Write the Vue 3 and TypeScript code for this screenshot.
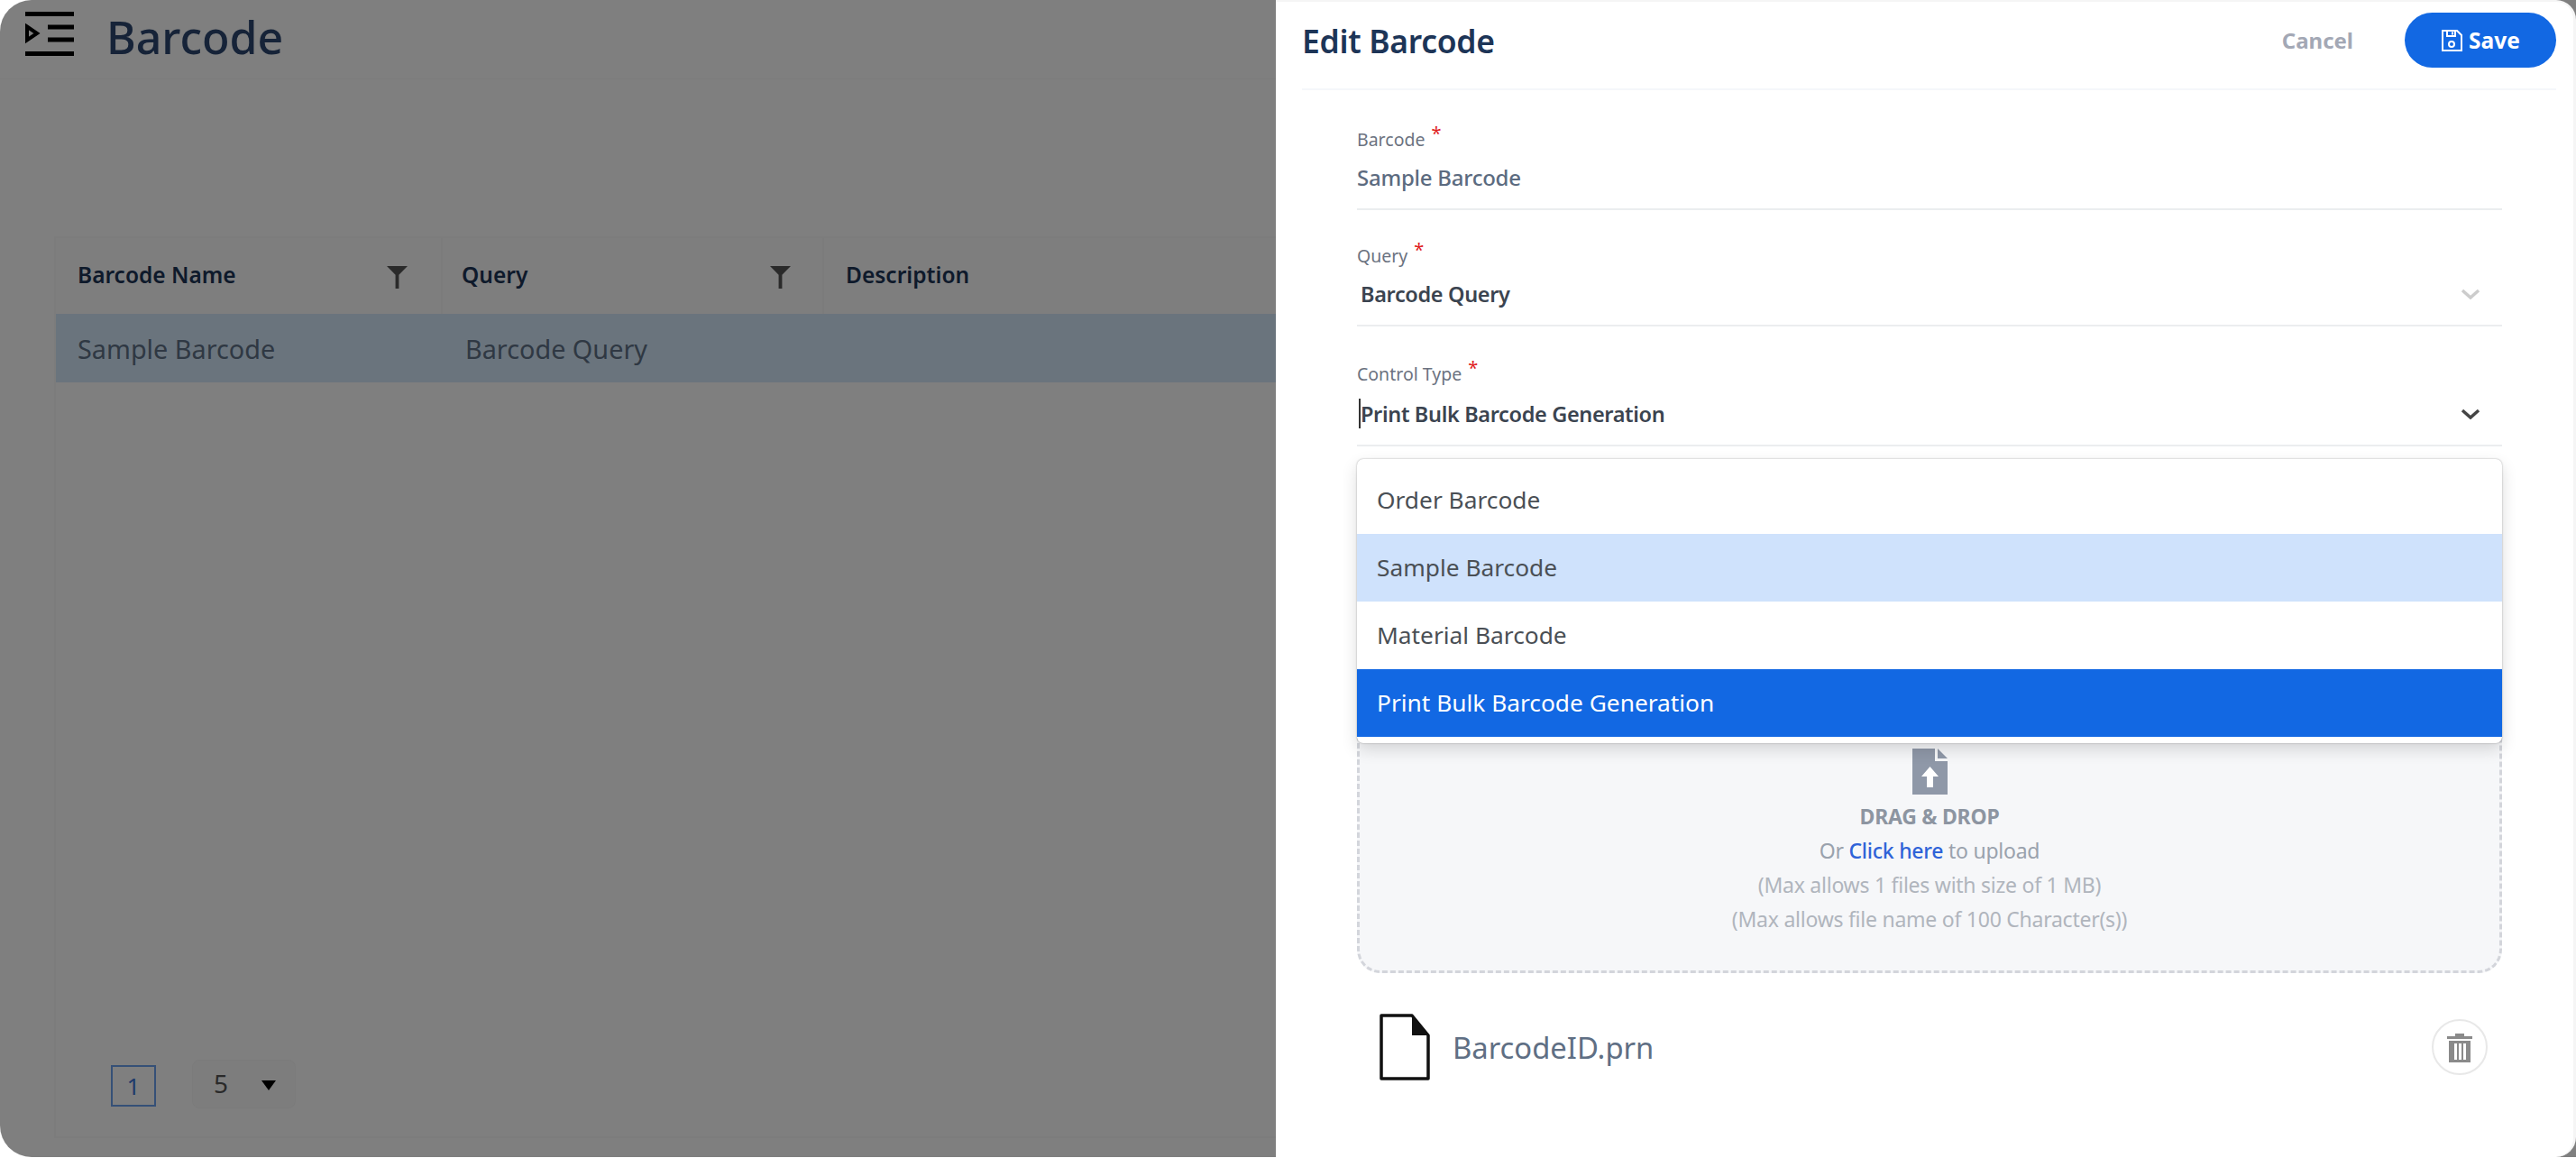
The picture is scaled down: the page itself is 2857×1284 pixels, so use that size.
<script setup lang="ts">
const columns = [
  { label: 'Barcode Name', cell: 'Sample Barcode', filter: true },
  { label: 'Query', cell: 'Barcode Query', filter: true },
  { label: 'Description', cell: '', filter: false },
];

const controlTypes = [
  { label: 'Order Barcode', state: '' },
  { label: 'Sample Barcode', state: 'hover' },
  { label: 'Material Barcode', state: '' },
  { label: 'Print Bulk Barcode Generation', state: 'selected' },
];
</script>

<template>
  <div class="screen">
    <div class="page">
      <header class="page-header">
        <svg class="menu-icon" viewBox="0 0 54 49">
          <path d="M0 2.5h54M0 46.500h54M25 17h29M25 31h29" stroke="#000" stroke-width="5" fill="none" />
          <path d="M2 16.500 13 24 2 31.500z" stroke="#000" stroke-width="4" fill="none" />
        </svg>
        <h1>Barcode</h1>
      </header>

      <section class="table">
        <div class="table-row head">
          <div v-for="col in columns" :key="col.label" class="th">
            <span>{{ col.label }}</span>
            <svg v-if="col.filter" class="filter" viewBox="0 0 24 26">
              <path d="M0 0h24L14 10v16h-4V10z" fill="#555" />
            </svg>
          </div>
        </div>
        <div class="table-row body">
          <div v-for="col in columns" :key="col.label" class="td">{{ col.cell }}</div>
        </div>
        <div class="pager">
          <span class="page-no">1</span>
          <div class="page-size">
            <span>5</span>
            <i class="caret-down"></i>
          </div>
        </div>
      </section>
    </div>

    <div class="overlay"></div>

    <aside class="drawer">
      <header class="drawer-header">
        <h2>Edit Barcode</h2>
        <div class="actions">
          <button class="cancel">Cancel</button>
          <button class="save">
            <svg viewBox="0 0 24 24" width="24" height="24" fill="none" stroke="#fff" stroke-width="2">
              <path d="M2 1h16l5 5v17H2z" />
              <path d="M7 1v6h9V1M13 2.500v3" />
              <circle cx="12" cy="16" r="3" />
            </svg>
            Save
          </button>
        </div>
      </header>

      <div class="form">
        <div class="field">
          <label>Barcode <em>*</em></label>
          <div class="value plain">Sample Barcode</div>
        </div>

        <div class="field second">
          <label>Query <em>*</em></label>
          <div class="value strong">
            Barcode Query
            <svg class="chevron light" viewBox="0 0 22 12"><path d="M2 2l9 8 9-8" /></svg>
          </div>
        </div>

        <div class="field control">
          <label>Control Type <em>*</em></label>
          <div class="value strong">
            <i class="text-caret"></i>
            Print Bulk Barcode Generation
            <svg class="chevron" viewBox="0 0 22 12"><path d="M2 2l9 8 9-8" /></svg>
          </div>
          <ul class="menu">
            <li v-for="item in controlTypes" :key="item.label" :class="item.state">{{ item.label }}</li>
          </ul>
        </div>

        <div class="dropzone">
          <svg class="upload-icon" viewBox="0 0 39 51">
            <path d="M0 0h25v14h14v37H0z" fill="#8f98a8" />
            <path d="M28 0l11 11H28z" fill="#8f98a8" />
            <path d="M19.500 20 29 31h-6v12h-7V31h-6z" fill="#fff" />
          </svg>
          <div class="drag">DRAG &amp; DROP</div>
          <div class="or">Or <a>Click here</a> to upload</div>
          <div class="hint">(Max allows 1 files with size of 1 MB)</div>
          <div class="hint">(Max allows file name of 100 Character(s))</div>
        </div>

        <div class="file-row">
          <svg class="file-icon" viewBox="0 0 56 74">
            <path d="M2 2h34l18 22v48H2z" fill="#fff" stroke="#111" stroke-width="3.500" stroke-linejoin="round" />
            <path d="M36 2l18 22H36z" fill="#111" />
          </svg>
          <span class="file-name">BarcodeID.prn</span>
          <button class="delete">
            <svg viewBox="0 0 28 33" width="28" height="33">
              <path d="M0 4h28v3H0zM9 1h10v3H9z" fill="#8a8a8a" />
              <path d="M2 9h24v24H2zM8 12v18h3V12zM13 12v18h3V12zM18 12v18h3V12z" fill="#8a8a8a" fill-rule="evenodd" />
            </svg>
          </button>
        </div>
      </div>
    </aside>
  </div>
</template>

<style>
html,
body {
  background: #fff;
}
</style>

<style scoped>
.screen {
  position: relative;
  width: 2857px;
  height: 1283px;
  overflow: hidden;
  border-radius: 35px 0 0 35px;
  background: #fff;
  font-family: "Noto Sans", sans-serif;
}

.page {
  height: 100%;
  display: flex;
  flex-direction: column;
  box-sizing: border-box;
  padding-bottom: 21px;
}

.page-header {
  height: 88px;
  flex: none;
  box-sizing: border-box;
  display: flex;
  align-items: center;
  gap: 36px;
  padding: 0 0 0 28px;
  border-bottom: 1px solid #f8f8f8;
}

.menu-icon {
  width: 54px;
  height: 49px;
  flex: none;
  margin-top: -12px;
}

.page-header h1 {
  margin: -6px 0 0;
  font-size: 50px;
  font-weight: 500;
  color: #2c4770;
}

.table {
  flex: 1;
  margin: 174px 0 0 60px;
  display: flex;
  flex-direction: column;
  border: 2px solid #f9f9f9;
  border-right: 0;
}

.table-row {
  display: grid;
  grid-template-columns: 429px 423px 1fr;
}

.head {
  height: 84px;
  background: #fdfdfd;
}

.th {
  display: flex;
  align-items: center;
  justify-content: space-between;
  padding: 0 37px 4px 24px;
  border-right: 2px solid #f6f6f6;
  font-size: 24.500px;
  font-weight: 600;
  color: #1d3557;
}

.th:nth-child(2) {
  padding-left: 21px;
  padding-right: 35px;
}

.filter {
  width: 23px;
  height: 25px;
  margin-top: 6px;
}

.body {
  height: 76px;
  background: #d4e9fb;
}

.td {
  display: flex;
  align-items: center;
  padding-left: 24px;
  font-size: 28.800px;
  color: #5f7186;
}

.td:nth-child(2) {
  padding-left: 25px;
}

.pager {
  margin-top: auto;
  margin-bottom: 31px;
  margin-left: 61px;
  display: flex;
  align-items: center;
  gap: 40px;
}

.page-no {
  width: 50px;
  height: 46px;
  box-sizing: border-box;
  border: 2px solid #6aa0ee;
  display: flex;
  align-items: center;
  justify-content: center;
  margin-top: 4px;
  font-size: 26px;
  color: #3c74d6;
}

.page-size {
  width: 115px;
  height: 54px;
  box-sizing: border-box;
  border: 1px solid #f6f6f6;
  border-radius: 8px;
  background: #fbfbfb;
  display: flex;
  align-items: center;
  justify-content: space-between;
  padding: 0 21px 2px 23px;
  font-size: 28px;
  color: #555;
}

.caret-down {
  width: 0;
  height: 0;
  border-left: 8px solid transparent;
  border-right: 8px solid transparent;
  border-top: 11px solid #000;
  margin-top: 4px;
}

.overlay {
  position: absolute;
  inset: 0;
  background: rgba(0, 0, 0, 0.5);
}

.drawer {
  position: absolute;
  top: 0;
  right: 0;
  bottom: 0;
  width: 1442px;
  box-sizing: border-box;
  background: #fff;
  border-top: 2px solid #f5f5f5;
  border-right: 3px solid #f5f5f5;
  border-radius: 0 22px 22px 0;
  display: flex;
  flex-direction: column;
}

.drawer-header {
  height: 98px;
  flex: none;
  box-sizing: border-box;
  margin: 0 19px 0 29px;
  border-bottom: 2px solid #f5f7fa;
  display: flex;
  align-items: center;
  justify-content: space-between;
  padding-bottom: 11px;
}

.drawer-header h2 {
  margin: 0;
  font-size: 35.500px;
  font-weight: 600;
  letter-spacing: -0.3px;
  color: #1d3557;
}

.actions {
  display: flex;
  align-items: center;
  gap: 57px;
}

.actions button {
  border: 0;
  background: none;
  font-family: inherit;
  font-weight: 700;
  padding: 0;
}

.actions .cancel {
  font-size: 24px;
  color: #a3a8b5;
}

.actions .save {
  width: 168px;
  height: 61px;
  border-radius: 31px;
  background: #1268e3;
  color: #fff;
  font-size: 24.500px;
  display: flex;
  align-items: center;
  justify-content: center;
  gap: 7px;
}

.form {
  padding: 41px 79px 0 90px;
  display: flex;
  flex-direction: column;
}

.field {
  position: relative;
  padding-bottom: 14px;
  border-bottom: 2px solid #ebedef;
  margin-bottom: 37px;
}

.field.second {
  margin-bottom: 39px;
}

.field label {
  display: block;
  height: 28px;
  line-height: 28px;
  font-size: 19.500px;
  color: #6b7280;
}

.field em {
  color: #e02020;
  font-style: normal;
  font-size: 20px;
  position: relative;
  top: -7px;
  margin-left: 2px;
}

.value {
  position: relative;
  height: 40px;
  line-height: 40px;
  margin-top: 8px;
  font-size: 24px;
}

.control .value {
  margin-top: 10px;
}

.value.plain {
  color: #5c6b80;
  font-weight: 500;
  letter-spacing: -0.25px;
}

.value.strong {
  padding-left: 4px;
  color: #3b4450;
  font-size: 23.500px;
  font-weight: 600;
  letter-spacing: -0.35px;
}

.chevron {
  position: absolute;
  right: 24px;
  top: 14px;
  width: 22px;
  height: 12px;
  fill: none;
  stroke: #444;
  stroke-width: 3.500;
}

.chevron.light {
  stroke: #ccc;
}

.text-caret {
  position: absolute;
  left: 2px;
  top: 3px;
  height: 33px;
  border-left: 2px solid #333;
}

.control {
  margin-bottom: 285px;
}

.menu {
  position: absolute;
  top: calc(100% + 16px);
  left: 0;
  right: 0;
  z-index: 2;
  margin: 0;
  padding: 8px 0 7px;
  list-style: none;
  background: #fff;
  border-radius: 7px;
  box-shadow: 0 0 2px rgba(0, 0, 0, 0.35), 0 7px 18px rgba(0, 0, 0, 0.14);
}

.menu li {
  height: 75px;
  line-height: 75px;
  padding-left: 22px;
  font-size: 26.300px;
  color: #4a4f55;
}

.menu li.hover {
  background: #cfe2fc;
}

.menu li.selected {
  background: #1268e3;
  color: #fff;
}

.dropzone {
  height: 299px;
  box-sizing: border-box;
  padding-top: 47px;
  border: 3px dashed #d3d5db;
  border-radius: 26px;
  background: #f6f7f9;
  display: flex;
  flex-direction: column;
  align-items: center;
  font-size: 23px;
  line-height: 38px;
  letter-spacing: -0.25px;
  color: #9aa2ad;
}

.upload-icon {
  width: 39px;
  height: 51px;
  margin-bottom: 5px;
}

.drag {
  font-weight: 700;
  color: #8d95a1;
}

.or a {
  color: #2f63d8;
  font-weight: 500;
}

.hint {
  color: #b0b5bd;
}

.file-row {
  margin-top: 45px;
  padding: 0 16px 0 25px;
  display: flex;
  align-items: center;
}

.file-icon {
  width: 56px;
  height: 74px;
  flex: none;
}

.file-name {
  margin-left: 25px;
  font-size: 32.800px;
  color: #5f6f84;
}

.delete {
  margin-left: auto;
  width: 62px;
  height: 62px;
  border: 2px solid #e8e8e8;
  border-radius: 50%;
  background: #fff;
  display: flex;
  align-items: center;
  justify-content: center;
  padding: 0;
}
</style>
